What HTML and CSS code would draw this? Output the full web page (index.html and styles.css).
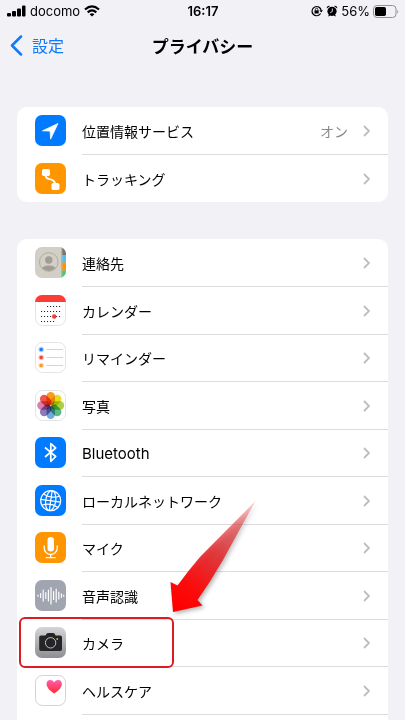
FILE: index.html
```html
<!DOCTYPE html>
<html lang="ja">

<head>
	<meta charset="UTF-8">
	<meta name="viewport" content="width=device-width, initial-scale=1.0">
	<title>プライバシー</title>
	<link rel="stylesheet" href="styles.css">
</head>

<body>
	<div class="status-bar">
		<div class="status-left">
			<svg width="19" height="12" viewBox="0 0 19 12">
				<rect x="0" y="8" width="4" height="3.5" rx="1" />
				<rect x="5" y="6" width="4" height="5.5" rx="1" />
				<rect x="10" y="3.5" width="4" height="8" rx="1" />
				<rect x="15" y="0.5" width="3.5" height="11" rx="1" />
			</svg>
			<span>docomo</span>
			<svg width="16" height="12" viewBox="0 0 16 12" fill="none" stroke="#000" stroke-width="2.2">
				<path d="M1 4.5Q8-1.8 15 4.5M3.7 7.3Q8 3.600 12.3 7.3" />
				<path d="M8 11.5L5.6 9.2Q8 7.3 10.4 9.2Z" fill="#000" stroke="none" />
			</svg>
		</div>
		<time class="clock">16:17</time>
		<div class="status-right">
			<svg width="12" height="12" viewBox="0 0 12 12" fill="none" stroke="#000">
				<path d="M9.6 8.5A4.6 4.6 0 1 1 10.2 5.5" stroke-width="1.2" />
				<path d="M8.3 5.3h3.7L10.2 7.6z" fill="#000" stroke="none" />
				<rect x="3.5" y="5.3" width="4.2" height="3.2" fill="#000" stroke="none" />
				<path d="M4.4 5.5V4.4a1.2 1.2 0 0 1 2.4 0v1.1" stroke-width="0.8" />
			</svg>
			<svg width="12" height="12" viewBox="0 0 12 12">
				<circle cx="6" cy="6.3" r="4.6" />
				<path d="M0.8 3.5A2.3 2.3 0 0 1 4 0.9zM11.2 3.5A2.3 2.3 0 0 0 8 0.9zM2 11.5l1-2 1.5 1zM10 11.5l-1-2-1.5 1z" />
				<path d="M6.3 3.5v3L4.2 7.8" fill="none" stroke="#f2f1f6" stroke-width="0.9" />
			</svg>
			<span>56%</span>
			<svg width="26" height="13" viewBox="0 0 26 13">
				<rect x="0.5" y="0.5" width="22.5" height="12" rx="3.5" fill="none" stroke="#919095" />
				<rect x="2" y="2" width="11" height="9" rx="1.8" />
				<path d="M24.3 4.5q1.7 2 0 4z" fill="#919095" />
			</svg>
		</div>
	</div>

	<header>
		<a class="back" href="#settings">
			<svg width="13" height="21" viewBox="0 0 13 21" fill="none" stroke="#107bf8" stroke-width="2.5" stroke-linecap="round" stroke-linejoin="round">
				<path d="M11 1.5L2 10.5l9 9" />
			</svg>
			設定
		</a>
		<h1>プライバシー</h1>
	</header>

	<svg class="defs" width="0" height="0">
		<symbol id="chevron" viewBox="0 0 7 12">
			<path d="M1 1l5 5-5 5" fill="none" stroke="#bebec1" stroke-width="1.9" />
		</symbol>
	</svg>

	<ul class="group">
		<li>
			<a href="#location">
				<svg class="icon" viewBox="0 0 31 31">
					<rect width="31" height="31" rx="7" fill="#007aff" />
					<path d="M23 8.500L7.5 15.8l7.6.3.5 8z" fill="#fff" stroke="#fff" stroke-width="0.8" stroke-linejoin="round" />
				</svg>
				<span class="row">
					<span class="label">位置情報サービス</span>
					<span class="value">オン</span>
					<svg class="chevron"><use href="#chevron" /></svg>
				</span>
			</a>
		</li>
		<li>
			<a href="#tracking">
				<svg class="icon" viewBox="0 0 31 31">
					<rect width="31" height="31" rx="7" fill="#ff9500" />
					<rect x="7" y="6" width="8" height="7" rx="1.8" fill="#fff" />
					<rect x="16.5" y="20" width="8" height="7" rx="1.8" fill="#fff" />
					<path d="M11 12v1.5q0 2 3.5 2.7 5.5 1.2 5.5 4.5" fill="none" stroke="#fff" stroke-width="1.8" />
				</svg>
				<span class="row">
					<span class="label">トラッキング</span>
					<svg class="chevron"><use href="#chevron" /></svg>
				</span>
			</a>
		</li>
	</ul>

	<ul class="group group--apps">
		<li>
			<a href="#contacts">
				<svg class="icon" viewBox="0 0 31 31">
					<clipPath id="tile"><rect width="31" height="31" rx="7" /></clipPath>
					<clipPath id="avatar"><circle cx="13.8" cy="15" r="9" /></clipPath>
					<g clip-path="url(#tile)">
						<rect width="31" height="31" fill="#d2d0c6" />
						<rect x="26" width="1.3" height="31" fill="#b4b2a9" />
						<rect x="27.3" width="4" height="8" fill="#77756f" />
						<rect x="27.3" y="8" width="4" height="7.5" fill="#55bef0" />
						<rect x="27.3" y="15.5" width="4" height="8" fill="#ff9300" />
						<rect x="27.3" y="23.5" width="4" height="8" fill="#4bc76c" />
						<g clip-path="url(#avatar)" fill="#9f9d95">
							<circle cx="13.8" cy="13" r="3.7" />
							<ellipse cx="13.8" cy="23.5" rx="8" ry="5" />
						</g>
						<circle cx="13.8" cy="15" r="9.3" fill="none" stroke="#a8a69e" stroke-width="0.9" />
					</g>
				</svg>
				<span class="row">
					<span class="label">連絡先</span>
					<svg class="chevron"><use href="#chevron" /></svg>
				</span>
			</a>
		</li>
		<li>
			<a href="#calendar">
				<svg class="icon" viewBox="0 0 31 31">
					<rect x="0.5" y="0.5" width="30" height="30" rx="7" fill="#fff" stroke="#e4e4e6" />
					<path d="M0 7a7 7 0 0 1 7-7h17a7 7 0 0 1 7 7z" fill="#fc3d35" />
					<g stroke="#222" stroke-width="1.1" stroke-dasharray="1.1 1.9">
						<path d="M12 11.5h14.5M6 16.5h20.5M6 21.5h20.5M6 26.5h14" />
					</g>
					<circle cx="19.2" cy="21.5" r="2.2" fill="#f5393c" />
				</svg>
				<span class="row">
					<span class="label">カレンダー</span>
					<svg class="chevron"><use href="#chevron" /></svg>
				</span>
			</a>
		</li>
		<li>
			<a href="#reminders">
				<svg class="icon" viewBox="0 0 31 31">
					<rect x="0.5" y="0.5" width="30" height="30" rx="7" fill="#fff" stroke="#e4e4e6" />
					<path d="M11.5 7.5H28M11.5 15.5H28M11.5 23.5H28" stroke="#cfcfd2" stroke-width="0.9" />
					<g fill-opacity="0.35">
						<circle cx="6.2" cy="7.5" r="2.8" fill="#1680fa" />
						<circle cx="6.2" cy="15.5" r="2.8" fill="#f9413c" />
						<circle cx="6.2" cy="23.5" r="2.8" fill="#fc9b1c" />
					</g>
					<circle cx="6.2" cy="7.5" r="1.7" fill="#1680fa" />
					<circle cx="6.2" cy="15.5" r="1.7" fill="#f9413c" />
					<circle cx="6.2" cy="23.5" r="1.7" fill="#fc9b1c" />
				</svg>
				<span class="row">
					<span class="label">リマインダー</span>
					<svg class="chevron"><use href="#chevron" /></svg>
				</span>
			</a>
		</li>
		<li>
			<a href="#photos">
				<svg class="icon" viewBox="0 0 31 31">
					<rect x="0.5" y="0.5" width="30" height="30" rx="7" fill="#fff" stroke="#e4e4e6" />
					<g class="petals">
						<rect x="11.5" y="2" width="8.4" height="13" rx="4.2" fill="#f99a1c" />
						<rect x="11.5" y="2" width="8.4" height="13" rx="4.2" fill="#eadb17" transform="rotate(45 15.7 15.5)" />
						<rect x="11.5" y="2" width="8.4" height="13" rx="4.2" fill="#a9cf45" transform="rotate(90 15.7 15.5)" />
						<rect x="11.5" y="2" width="8.4" height="13" rx="4.2" fill="#5cb98a" transform="rotate(135 15.7 15.5)" />
						<rect x="11.5" y="2" width="8.4" height="13" rx="4.2" fill="#73a9d8" transform="rotate(180 15.7 15.5)" />
						<rect x="11.5" y="2" width="8.4" height="13" rx="4.2" fill="#8f79b8" transform="rotate(225 15.7 15.5)" />
						<rect x="11.5" y="2" width="8.4" height="13" rx="4.2" fill="#d681ad" transform="rotate(270 15.7 15.5)" />
						<rect x="11.5" y="2" width="8.4" height="13" rx="4.2" fill="#ef5548" transform="rotate(315 15.7 15.5)" />
					</g>
				</svg>
				<span class="row">
					<span class="label">写真</span>
					<svg class="chevron"><use href="#chevron" /></svg>
				</span>
			</a>
		</li>
		<li>
			<a href="#bluetooth">
				<svg class="icon" viewBox="0 0 31 31">
					<rect width="31" height="31" rx="7" fill="#007aff" />
					<path d="M10 10.5l10.7 9-4.9 4.8V6.7l4.9 4.3-10.7 9" fill="none" stroke="#fff" stroke-width="1.7" stroke-linejoin="round" />
				</svg>
				<span class="row">
					<span class="label label--latin">Bluetooth</span>
					<svg class="chevron"><use href="#chevron" /></svg>
				</span>
			</a>
		</li>
		<li>
			<a href="#local-network">
				<svg class="icon" viewBox="0 0 31 31">
					<rect width="31" height="31" rx="7" fill="#007aff" />
					<g fill="none" stroke="#fff" stroke-width="1.2">
						<circle cx="15.7" cy="15.7" r="10" />
						<g transform="rotate(8 15.7 15.7)">
							<ellipse cx="15.7" cy="15.7" rx="5" ry="10" />
							<path d="M15.7 5.7v20M5.7 15.7h20M7.5 10q8.2 4 16.4 0M7.5 21.4q8.2-4 16.4 0" />
						</g>
					</g>
				</svg>
				<span class="row">
					<span class="label">ローカルネットワーク</span>
					<svg class="chevron"><use href="#chevron" /></svg>
				</span>
			</a>
		</li>
		<li>
			<a href="#microphone">
				<svg class="icon" viewBox="0 0 31 31">
					<rect width="31" height="31" rx="7" fill="#ff9500" />
					<rect x="12.5" y="5" width="6.5" height="14.5" rx="3.2" fill="#fff" />
					<path d="M9.2 14v2a6.5 6.5 0 0 0 13 0v-2M15.7 22.5v3M11.2 25.7h9" fill="none" stroke="#fff" stroke-width="1.3" stroke-linecap="round" />
				</svg>
				<span class="row">
					<span class="label">マイク</span>
					<svg class="chevron"><use href="#chevron" /></svg>
				</span>
			</a>
		</li>
		<li>
			<a href="#speech">
				<svg class="icon" viewBox="0 0 31 31">
					<rect width="31" height="31" rx="7" fill="#a0a5b0" />
					<path d="M3 15v1.2M5.600 13.5v4M8.2 10v11M10.8 12.5v6M13.4 10v11M16 7.5v16.5M18.6 11.5v8M21.2 9v13M23.8 12v7M26.4 13.8v3.5M28.700 15v1.2" fill="none" stroke="#fff" stroke-width="1.2" stroke-linecap="round" />
				</svg>
				<span class="row">
					<span class="label">音声認識</span>
					<svg class="chevron"><use href="#chevron" /></svg>
				</span>
			</a>
		</li>
		<li>
			<a href="#camera">
				<svg class="icon" viewBox="0 0 31 31">
					<linearGradient id="steel" x2="0" y2="1">
						<stop offset="0" stop-color="#d5d5d7" />
						<stop offset="1" stop-color="#8e8e93" />
					</linearGradient>
					<rect width="31" height="31" rx="7" fill="url(#steel)" />
					<path d="M6 8.500h4.5l1.3-1.9q.5-.6 1.3-.6h5q.8 0 1.3.6l1.3 1.9h4.500q1.8 0 1.8 1.8v11.9q0 1.8-1.8 1.8H6q-1.8 0-1.8-1.8V10.3q0-1.8 1.8-1.8z" fill="#252528" />
					<circle cx="15.6" cy="15.8" r="5.2" fill="none" stroke="#c3c3c6" />
					<circle cx="22.3" cy="12" r="0.9" fill="#e5b52a" />
				</svg>
				<span class="row">
					<span class="label">カメラ</span>
					<svg class="chevron"><use href="#chevron" /></svg>
				</span>
			</a>
			<span class="marker-box"></span>
			<svg class="marker-arrow" width="110" height="130" viewBox="0 0 110 130">
				<linearGradient id="fade" gradientUnits="userSpaceOnUse" x1="96" y1="10" x2="18" y2="118">
					<stop offset="0" stop-color="#e23035" stop-opacity="0.2" />
					<stop offset="0.25" stop-color="#e02c30" stop-opacity="0.6" />
					<stop offset="0.5" stop-color="#e32226" stop-opacity="0.85" />
					<stop offset="0.8" stop-color="#fa0d0d" />
					<stop offset="1" stop-color="#ff0000" />
				</linearGradient>
				<path d="M95.5 11L40 67Q28 81 17.5 95.5L10.5 92 13 122l29.5-6.5-5-5.5Q51 91 63 70z" fill="url(#fade)" />
			</svg>
		</li>
		<li>
			<a href="#health">
				<svg class="icon" viewBox="0 0 31 31">
					<linearGradient id="pulse" x2="0" y2="1">
						<stop offset="0" stop-color="#ff5fae" />
						<stop offset="1" stop-color="#ff2b2f" />
					</linearGradient>
					<rect x="0.5" y="0.5" width="30" height="30" rx="7" fill="#fff" stroke="#d2d2d4" />
					<path d="M19.2 18.5Q11.5 13.5 11.5 9.2q0-4 3.7-4.2 2.8 0 4 2.2 1.2-2.2 4-2.2 3.7.2 3.7 4.2 0 4.3-7.7 9.3z" fill="url(#pulse)" />
				</svg>
				<span class="row">
					<span class="label">ヘルスケア</span>
					<svg class="chevron"><use href="#chevron" /></svg>
				</span>
			</a>
		</li>
	</ul>
</body>

</html>
```
FILE: styles.css
```css
* {
	box-sizing: border-box;
}

body {
	display: flex;
	flex-direction: column;
	height: 100vh;
	margin: 0;
	overflow: hidden;
	background-color: #f2f1f6;
	color: #000;
	font-family: Inter, 'Noto Sans CJK JP', sans-serif;
	font-size: 14px;
}

svg {
	display: block;
	flex: none;
}

a {
	color: inherit;
	text-decoration: none;
}

.defs {
	position: absolute;
}

.status-bar,
header {
	display: grid;
	grid-template-columns: 1fr auto 1fr;
	align-items: center;
	flex: none;
}

.status-bar {
	height: 22px;
	padding: 0 6px 0 7px;
	font-size: 13px;
}

.status-left,
.status-right {
	display: flex;
	align-items: center;
	gap: 4px;
}

.status-right {
	justify-content: flex-end;
	gap: 3px;
}

.clock {
	font-weight: 600;
}

header {
	height: 46px;
	margin-bottom: 39px;
	padding: 0 10px;
}

.back {
	display: flex;
	align-items: center;
	gap: 9px;
	color: #107bf8;
	font-size: 16px;
}

h1 {
	margin: 0;
	font-size: 17px;
	font-weight: 700;
}

.group {
	flex: none;
	margin: 0 17px 37px;
	padding: 0;
	border-radius: 10px;
	background-color: #fff;
	list-style: none;
}

/* runs on past the bottom of the screen */
.group--apps {
	flex: 1 0 auto;
	margin-bottom: 0;
	border-radius: 10px 10px 0 0;
}

.group li {
	position: relative;
	height: 48px;
}

.group li:nth-child(odd) {
	height: 47px;
}

.group a {
	display: flex;
	align-items: center;
	gap: 16px;
	height: 100%;
	padding-left: 18px;
}

.icon {
	width: 31px;
	height: 31px;
}

.row {
	display: flex;
	flex: 1;
	align-items: center;
	gap: 15px;
	height: 100%;
	padding-right: 18px;
}

.group li + li .row {
	border-top: 1px solid #dcdcdf;
}

.group--apps::after {
	content: "";
	display: block;
	margin-left: 65px;
	border-top: 1px solid #dcdcdf;
}

.label {
	flex: 1;
}

.label--latin {
	font-size: 15px;
}

.value {
	color: #8a8a8e;
}

.chevron {
	width: 7px;
	height: 12px;
}

.petals {
	isolation: isolate;
}

.petals rect {
	mix-blend-mode: multiply;
}

.marker-box {
	position: absolute;
	z-index: 1;
	top: -2px;
	left: 2px;
	width: 155px;
	height: 51px;
	border: 2px solid #dc1c22;
	border-radius: 6px;
	pointer-events: none;
}

.marker-arrow {
	position: absolute;
	z-index: 1;
	top: -129px;
	left: 143px;
	filter: drop-shadow(2px 2px 2px rgba(0, 0, 0, 0.3));
	pointer-events: none;
}
```
